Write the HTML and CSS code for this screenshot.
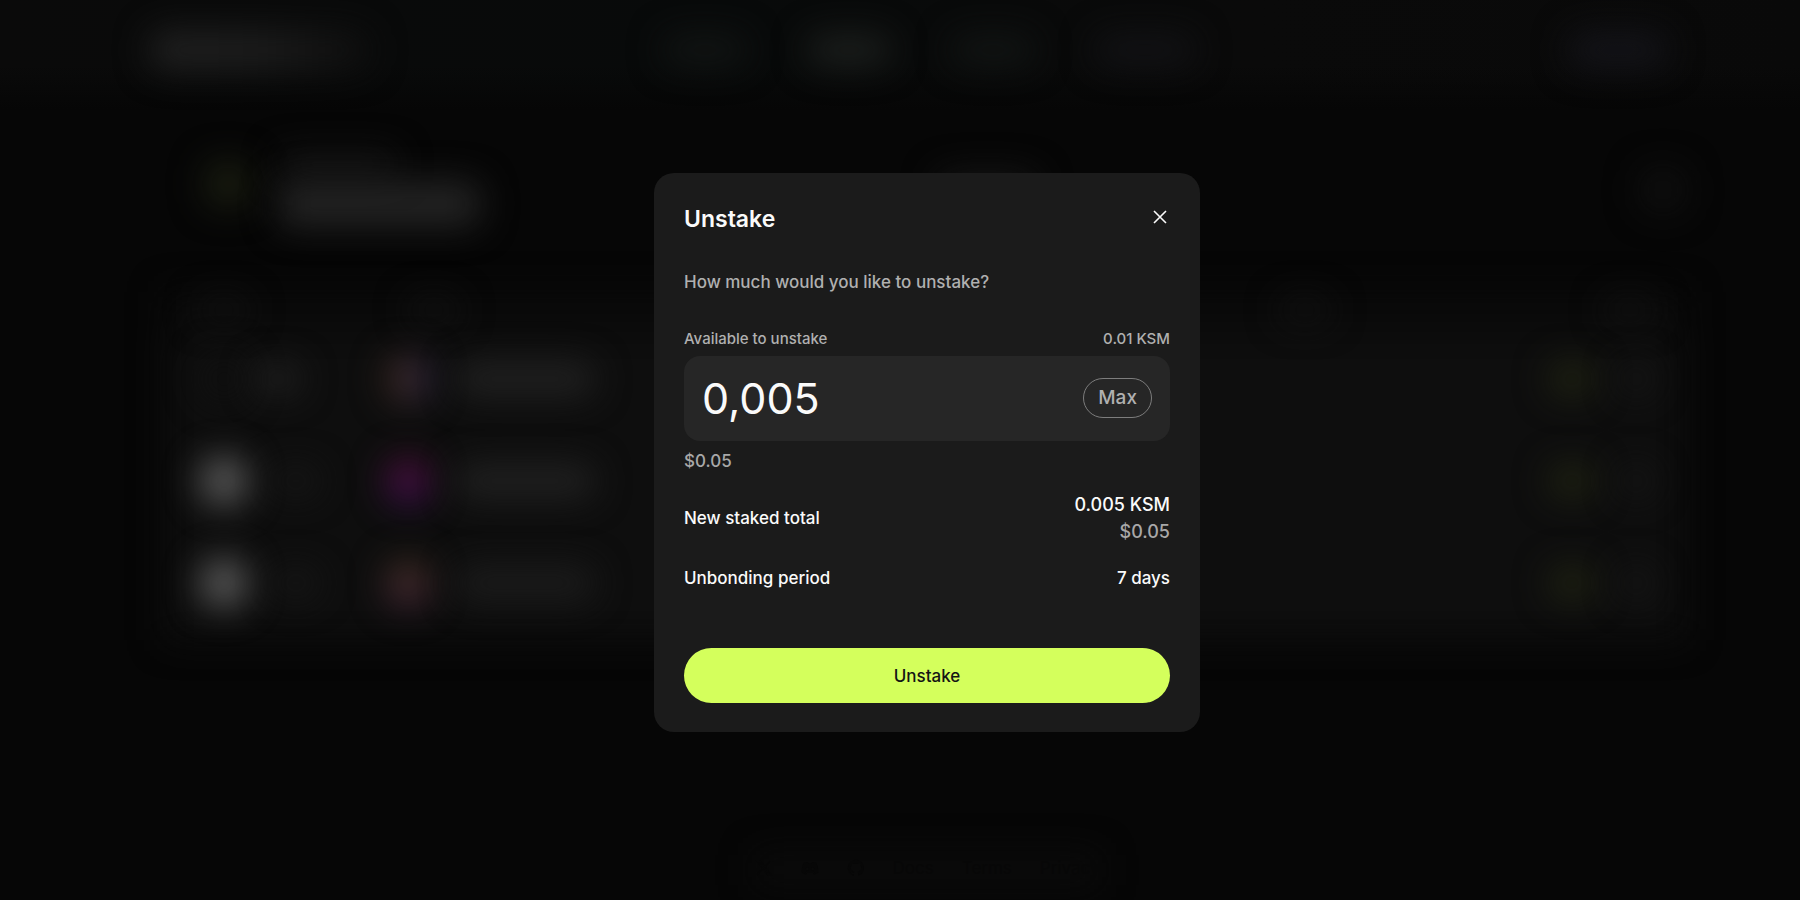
FILE: index.html
```html
<!DOCTYPE html>
<html lang="en">
<head>
<meta charset="utf-8">
<meta name="viewport" content="width=device-width, initial-scale=1">
<title>Unstake</title>
<link rel="stylesheet" href="styles.css">
</head>
<body>
<div class="page">
  <div class="topbar" aria-hidden="true">
    <div class="topbar-row">
      <span class="blob logo"></span>
      <div class="tabs">
        <span class="blob tab"></span>
        <span class="blob tab tab-active"></span>
        <span class="blob tab"></span>
        <span class="blob tab tab-wide"></span>
      </div>
      <span class="blob wallet"></span>
    </div>
  </div>
  <div class="content" aria-hidden="true">
    <div class="heading">
      <span class="blob mark"></span>
      <div class="heading-lines">
        <span class="blob line-small"></span>
        <span class="blob line-large"></span>
      </div>
      <span class="blob switcher"></span>
      <span class="blob round"></span>
    </div>
    <div class="board">
      <div class="board-row board-head">
        <span class="blob cell"></span>
        <span class="blob cell"></span>
        <span class="blob cell"></span>
        <span class="blob cell cell-end"></span>
      </div>
      <div class="board-row">
        <div class="pair"><span class="blob coin coin-dark"></span><span class="blob ticker ticker-bright"></span></div>
        <div class="pair"><span class="blob avatar avatar-sunset"></span><span class="blob name"></span></div>
        <span></span>
        <div class="pair actions"><span class="blob stake"></span><span class="blob more"></span></div>
      </div>
      <div class="board-row">
        <div class="pair"><span class="blob coin"></span><span class="blob ticker"></span></div>
        <div class="pair"><span class="blob avatar avatar-magenta"></span><span class="blob name"></span></div>
        <span></span>
        <div class="pair actions"><span class="blob stake"></span><span class="blob more"></span></div>
      </div>
      <div class="board-row">
        <div class="pair"><span class="blob coin"></span><span class="blob ticker"></span></div>
        <div class="pair"><span class="blob avatar avatar-rose"></span><span class="blob name name-dim"></span></div>
        <span></span>
        <div class="pair actions"><span class="blob stake"></span><span class="blob more"></span></div>
      </div>
    </div>
  </div>
  <footer class="footer">
    <a href="#" aria-label="X"><svg class="social" viewBox="0 0 24 24"><path d="M3 3l14 18h4L7 3zM3 21l7-8M20 3l-7 8" fill="none" stroke="currentColor" stroke-width="2"/></svg></a>
    <a href="#" aria-label="Discord"><svg class="social" viewBox="0 0 24 24"><path fill="currentColor" fill-rule="evenodd" d="M20 5a19 19 0 0 0-5-1l-1 2h-4L9 4a19 19 0 0 0-5 1C1 10 1 14 1 18a19 19 0 0 0 6 3l1-2-2-1 1-1c3 1.500 7 1.500 10 0l1 1-2 1 1 2a19 19 0 0 0 6-3c0-4 0-8-3-13zM8.500 15a2 2 0 1 1 0-4 2 2 0 0 1 0 4zm7 0a2 2 0 1 1 0-4 2 2 0 0 1 0 4z"/></svg></a>
    <a href="#" aria-label="GitHub"><svg class="social" viewBox="0 0 24 24"><path fill="currentColor" d="M12 1a11 11 0 0 0-3.500 21.400c.6.100.8-.2.800-.5v-2c-3 .7-3.700-1.300-3.700-1.300-.5-1.300-1.200-1.600-1.200-1.600-1-.7.100-.7.100-.7 1.100.1 1.700 1.100 1.700 1.100 1 1.700 2.600 1.200 3.200.9.100-.7.400-1.200.7-1.500-2.400-.3-5-1.200-5-5.400 0-1.200.4-2.200 1.100-2.900-.1-.3-.5-1.400.1-2.900 0 0 .9-.3 3 1.100a10 10 0 0 1 5.500 0c2.100-1.400 3-1.100 3-1.100.6 1.500.2 2.600.1 2.900.7.800 1.100 1.700 1.100 2.900 0 4.200-2.600 5.100-5 5.400.4.300.7 1 .7 2v3c0 .3.200.6.800.5A11 11 0 0 0 12 1z"/></svg></a>
    <a href="#">Docs</a>
    <a href="#">Terms</a>
    <a href="#">Privacy</a>
  </footer>
</div>

<div class="overlay">
  <form class="modal" role="dialog" aria-modal="true" aria-labelledby="modal-title">
    <header class="modal-head">
      <h1 class="modal-title" id="modal-title">Unstake</h1>
      <button class="close" type="button" aria-label="Close">
        <svg class="close-icon" viewBox="0 0 20 20"><path d="M4 4l12 12M16 4L4 16" fill="none" stroke="currentColor" stroke-width="1.600"/></svg>
      </button>
    </header>
    <p class="question">How much would you like to unstake?</p>
    <div class="available">
      <label for="amount">Available to unstake</label>
      <span>0.01 KSM</span>
    </div>
    <div class="field">
      <input class="amount" id="amount" type="text" inputmode="decimal" value="0,005">
      <button class="max" type="button">Max</button>
    </div>
    <p class="fiat">$0.05</p>
    <dl class="summary">
      <div class="summary-row">
        <dt>New staked total</dt>
        <dd><span class="token">0.005 KSM</span><span class="muted">$0.05</span></dd>
      </div>
      <div class="summary-row">
        <dt>Unbonding period</dt>
        <dd>7 days</dd>
      </div>
    </dl>
    <button class="submit" type="submit">Unstake</button>
  </form>
</div>
</body>
</html>
```

FILE: styles.css
```css
* {
  box-sizing: border-box;
}

body {
  margin: 0;
  background: #060606;
  color: #fafafa;
  font-family: Inter, "Liberation Sans", sans-serif;
  font-size: 17px;
}

h1, p, dl, dd {
  margin: 0;
}

button, input {
  font: inherit;
}

/* Dimmed page behind the dialog */
.page {
  display: flex;
  flex-direction: column;
  min-height: 100vh;
  overflow: hidden;
}

.blob {
  display: block;
  flex: none;
  filter: blur(17px);
  border-radius: 16px;
}

.topbar {
  padding: 20px 132px 30px 150px;
  background:
    linear-gradient(to bottom, transparent 60%, #060606),
    linear-gradient(to right, #0a0a0a, #080a0a 40%, #0a0a0a 70%, #090909);
}

.topbar-row {
  display: grid;
  grid-template-columns: 1fr auto 1fr;
  align-items: center;
  height: 60px;
}

.logo {
  width: 220px;
  height: 38px;
  background: linear-gradient(to right, #222222, #1e1e1e 50%, #0e0e0e);
}

.tabs {
  display: flex;
  gap: 60px;
  margin-left: 40px;
}

.tab {
  width: 84px;
  height: 30px;
  background: #121514;
}

.tab-active {
  background: #1d201e;
}

.tab-wide {
  width: 100px;
  background: #131316;
}

.wallet {
  justify-self: end;
  width: 100px;
  height: 36px;
  background: #141419;
}

.content {
  padding: 32px 115px 0 165px;
}

.heading {
  display: flex;
  align-items: center;
  height: 96px;
  padding-left: 40px;
}

.mark {
  width: 46px;
  height: 46px;
  margin-bottom: 12px;
  background: #191c10;
}

.heading-lines {
  display: grid;
  gap: 6px;
  margin-left: 26px;
}

.line-small {
  width: 120px;
  height: 22px;
  background: #161616;
}

.line-large {
  width: 204px;
  height: 46px;
  background: #232323;
}

.switcher {
  width: 100px;
  height: 34px;
  margin-left: 456px;
  background: #161616;
}

.round {
  width: 44px;
  height: 44px;
  margin-left: auto;
  background: #0f0f0f;
}

.board {
  position: relative;
  isolation: isolate;
  margin-top: 54px;
  padding-bottom: 6px;
}

.board::before {
  content: "";
  position: absolute;
  z-index: -1;
  inset: 0;
  background: linear-gradient(to bottom, #0a0a0a 30px, #0e0e0e 60px);
  filter: blur(17px);
}

.board-row {
  display: grid;
  grid-template-columns: 210px 7fr 2fr 156px;
  align-items: center;
  height: 102px;
  padding-left: 34px;
}

.board-head {
  height: 36px;
}

.cell {
  width: 50px;
  height: 20px;
  background: #131313;
}

.cell-end {
  margin-left: 76px;
}

.pair {
  display: flex;
  align-items: center;
  gap: 24px;
}

.coin {
  width: 50px;
  height: 50px;
  border-radius: 50%;
  background: #575757;
}

.coin-dark {
  background: #101010;
}

.ticker {
  width: 46px;
  height: 28px;
  background: #171717;
}

.ticker-bright {
  margin-left: -18px;
  background: #212121;
}

.avatar {
  width: 46px;
  height: 50px;
  margin-left: -24px;
  border-radius: 50%;
}

.avatar-sunset {
  background: linear-gradient(to right, #33241c 20%, #412a2a 45%, #2b2440 75%);
}

.avatar-magenta {
  background: linear-gradient(to bottom, #3b0c24, #4a1044 50%, #260c48);
}

.avatar-rose {
  background: linear-gradient(to bottom, #2e2416, #452c2c 50%, #3b1c38);
}

.name {
  width: 140px;
  height: 34px;
  background: #212121;
}

.name-dim {
  background: #1c1c1c;
}

.stake {
  width: 46px;
  height: 34px;
  margin-left: 20px;
  background: #1f2212;
}

.more {
  width: 34px;
  height: 34px;
  background: #161616;
}

.footer {
  position: relative;
  isolation: isolate;
  display: flex;
  align-items: center;
  justify-content: center;
  gap: 28px;
  margin-top: auto;
  padding: 20px 0 20px 54px;
  line-height: 24px;
  font-size: 17px;
}

.footer::before {
  content: "";
  position: absolute;
  z-index: -1;
  inset: 18px 39% 14px 42%;
  background: #0b0b0b;
  filter: blur(17px);
}

.footer a {
  display: flex;
  color: #070707;
  text-decoration: none;
}

.social {
  width: 18px;
  height: 18px;
}

/* Dialog */
.overlay {
  position: fixed;
  inset: 0;
  display: flex;
  align-items: center;
  justify-content: center;
  padding: 5px 0 0 54px;
}

.modal {
  display: flex;
  flex-direction: column;
  width: 100%;
  max-width: 546px;
  padding: 30px 30px 29px;
  border-radius: 20px;
  background: #1b1b1b;
  font-weight: 500;
}

.modal-head {
  display: flex;
  align-items: center;
  justify-content: space-between;
}

.modal-title {
  font-size: 23px;
  font-weight: 600;
  line-height: 32px;
}

.close {
  display: flex;
  margin-bottom: 4px;
  padding: 0;
  border: 0;
  background: none;
  color: #fafafa;
  cursor: pointer;
}

.close-icon {
  width: 20px;
  height: 20px;
}

.question {
  margin-top: 34px;
  color: #b0b0b0;
  line-height: 26px;
}

.available {
  display: flex;
  justify-content: space-between;
  margin-top: 32px;
  color: #b0b0b0;
  font-size: 15px;
  line-height: 24px;
}

.field {
  display: flex;
  align-items: center;
  gap: 16px;
  margin-top: 5px;
  padding: 17px 18px 19px;
  border-radius: 16px;
  background: #262626;
}

.amount {
  flex: 1;
  min-width: 0;
  height: 49px;
  padding: 0;
  border: 0;
  outline: 0;
  background: none;
  color: #fafafa;
  font-size: 43px;
  font-weight: 400;
}

.max {
  height: 40px;
  padding: 0 14px;
  border: 1px solid #7d7d7d;
  border-radius: 20px;
  background: none;
  color: #b0b0b0;
  font-size: 19px;
  cursor: pointer;
}

.fiat {
  margin-top: 8px;
  color: #a8a8a8;
  line-height: 24px;
}

.summary {
  display: grid;
  gap: 20px;
  margin-top: 18px;
  line-height: 27px;
}

.summary-row {
  display: flex;
  align-items: center;
  justify-content: space-between;
}

.summary-row dd {
  display: grid;
  justify-items: end;
}

.token, .muted {
  font-size: 18px;
}

.muted {
  color: #a8a8a8;
}

.submit {
  height: 55px;
  margin-top: 56px;
  border: 0;
  border-radius: 28px;
  background: #d4ff5c;
  color: #141414;
  cursor: pointer;
}
```
